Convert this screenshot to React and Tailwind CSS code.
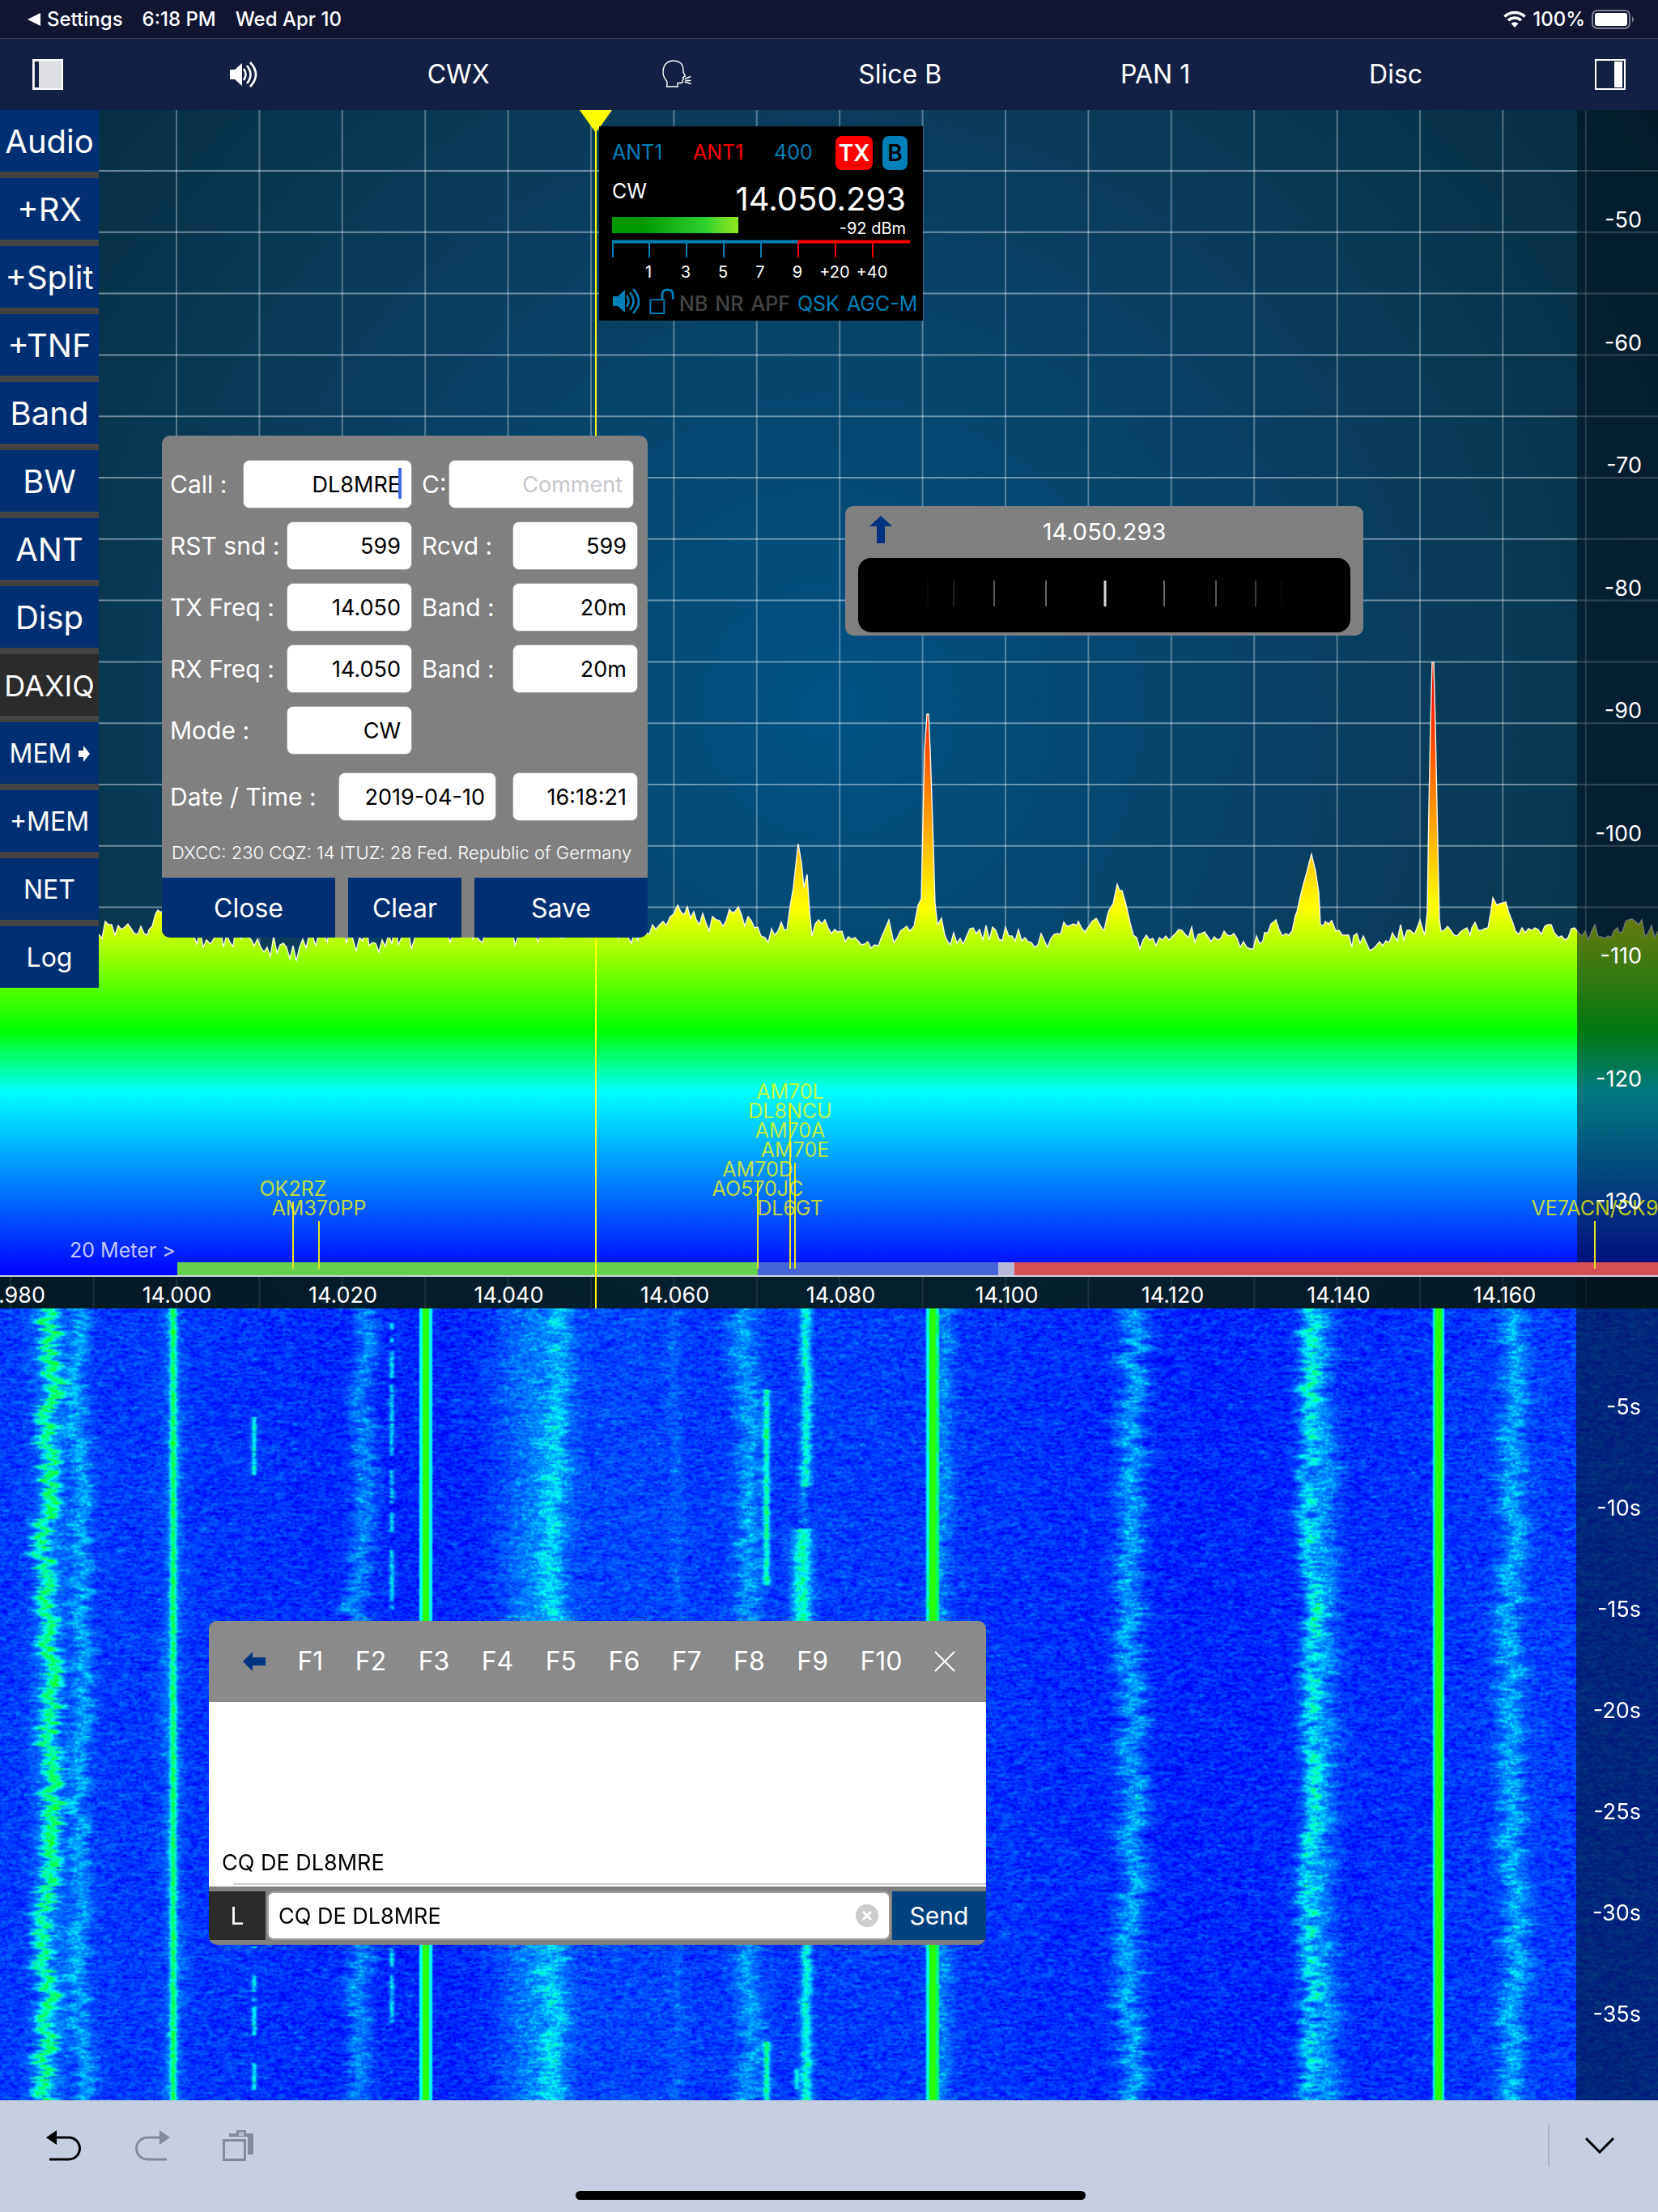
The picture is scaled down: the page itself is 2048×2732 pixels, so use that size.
import React, { useEffect, useRef } from "react";

// Small seeded generator so the noise looks the same on every load
const createRandom = (seed) => {
  let s = seed;
  return () => {
    s = (s * 1664525 + 1013904223) % 4294967296;
    return s / 4294967296;
  };
};

const sideButtons = [
  { label: "Audio" },
  { label: "+RX" },
  { label: "+Split" },
  { label: "+TNF" },
  { label: "Band" },
  { label: "BW" },
  { label: "ANT" },
  { label: "Disp" },
  { label: "DAXIQ", style: "bg-[#2b2b2b] text-[36px]" },
  { label: "MEM", style: "bg-[#003073] text-[32px]", arrow: true },
  { label: "+MEM", style: "bg-[#003073] text-[32px]" },
  { label: "NET", style: "bg-[#003073] text-[32px]" },
  { label: "Log", style: "bg-[#003073] text-[32px]" },
];

const dbmLabels = [-50, -60, -70, -80, -90, -100, -110, -120, -130];
const timeLabels = ["-5s", "-10s", "-15s", "-20s", "-25s", "-30s", "-35s"];
const freqLabels = [
  "13.980", "14.000", "14.020", "14.040", "14.060",
  "14.080", "14.100", "14.120", "14.140", "14.160",
];

// x is the position on the 2048 wide plot, level is the text row counted from below
const spots = [
  { call: "OK2RZ", x: 362, level: 1 },
  { call: "AM370PP", x: 394, level: 0 },
  { call: "AM70L", x: 976, level: 6 },
  { call: "DL8NCU", x: 976, level: 5 },
  { call: "AM70A", x: 976, level: 4 },
  { call: "AM70E", x: 982, level: 3 },
  { call: "AM70D", x: 936, level: 2 },
  { call: "AO570JC", x: 936, level: 1 },
  { call: "DL6GT", x: 976, level: 0 },
  { call: "VE7ACN/CK9", x: 1970, level: 0 },
];

// Shape of the trace without noise: [x, y, noise]
const traceShape = [
  [0, 1018, 1], [122, 1018, 1], [150, 1012, 1], [170, 1018, 1], [184, 1012, 1], [195, 988, 0.5],
  [215, 1000, 1], [260, 1030, 1], [290, 1018, 1], [330, 1034, 1], [370, 1034, 1], [400, 1016, 1],
  [460, 1028, 1], [500, 1016, 1], [600, 1014, 1], [700, 1010, 1], [790, 1012, 1], [815, 1006, 0.6],
  [828, 996, 0.5], [837, 982, 0.4], [845, 994, 0.6], [860, 1000, 0.8], [885, 1000, 0.8],
  [903, 990, 0.6], [912, 984, 0.4], [920, 1008, 0.8], [945, 1022, 1], [972, 1012, 0.6],
  [980, 960, 0.2], [986, 906, 0], [990, 930, 0.1], [993, 960, 0.1], [997, 944, 0.1], [1000, 990, 0.3],
  [1003, 1020, 0.8], [1015, 1005, 0.8], [1040, 1014, 0.8], [1060, 1026, 0.6], [1085, 1032, 0.5],
  [1098, 1000, 0.3], [1104, 1028, 0.4], [1112, 1014, 0.5], [1120, 1008, 0.5], [1129, 1008, 0.3],
  [1134, 982, 0.2], [1138, 974, 0], [1140, 880, 0], [1142, 790, 0], [1145, 746, 0], [1147, 746, 0], [1149, 790, 0],
  [1152, 880, 0], [1155, 980, 0], [1158, 1006, 0.3], [1163, 998, 0.3], [1170, 1026, 0.6],
  [1190, 1030, 0.6], [1202, 1010, 0.6], [1250, 1020, 0.8], [1290, 1026, 0.8], [1318, 1008, 0.6],
  [1332, 1002, 0.5], [1345, 1008, 0.6], [1354, 998, 0.3], [1364, 1012, 0.3], [1370, 988, 0.2],
  [1375, 980, 0.1], [1380, 956, 0], [1383, 964, 0], [1386, 964, 0], [1392, 986, 0.2], [1396, 1004, 0.4],
  [1404, 1022, 0.7], [1440, 1020, 0.9], [1480, 1018, 0.9], [1520, 1020, 0.9], [1540, 1034, 0.7],
  [1562, 1016, 0.6], [1576, 1000, 0.4], [1584, 1020, 0.5], [1596, 1014, 0.4], [1602, 990, 0.2],
  [1610, 956, 0.1], [1620, 919, 0], [1625, 940, 0], [1629, 966, 0], [1631, 1006, 0.2], [1637, 1002, 0.4],
  [1650, 1014, 0.7], [1672, 1020, 0.8], [1700, 1032, 0.6], [1722, 1020, 0.8], [1748, 1016, 0.6],
  [1754, 1000, 0.3], [1760, 1018, 0.2], [1763, 990, 0], [1765, 860, 0], [1767, 760, 0], [1769, 682, 0], [1771, 682, 0], [1773, 760, 0],
  [1775, 860, 0], [1778, 1000, 0.1], [1780, 1014, 0.2], [1788, 1008, 0.4], [1800, 1020, 0.6], [1818, 1010, 0.6],
  [1838, 1010, 0.2], [1844, 973, 0.1], [1849, 982, 0.1], [1860, 978, 0.1], [1868, 1002, 0.4],
  [1876, 1018, 0.6], [1900, 1012, 0.7], [1912, 1006, 0.6], [1925, 1022, 0.5], [1950, 1016, 0.8],
  [2000, 1016, 0.9], [2024, 1006, 0.7], [2048, 1014, 0.9],
];

const buildTrace = () => {
  const random = createRandom(11);
  const points = [];
  for (let i = 0; i < traceShape.length - 1; i++) {
    const [x1, y1, n1] = traceShape[i];
    const [x2, y2, n2] = traceShape[i + 1];
    points.push([x1, y1]);
    for (let x = x1 + 4; x < x2 - 1; x += 4) {
      const t = (x - x1) / (x2 - x1);
      const noise = (random() + random() - 1) * 21 * (n1 + (n2 - n1) * t);
      points.push([x, Math.round(y1 + (y2 - y1) * t + noise)]);
    }
  }
  points.push([2048, 1014]);
  return points.map((p) => p.join(",")).join(" L");
};

const trace = buildTrace();

const Spectrum = () => (
  <svg
    viewBox="0 0 2048 1480"
    preserveAspectRatio="none"
    className="absolute inset-0 h-full w-full"
    aria-hidden="true"
  >
    <defs>
      <radialGradient id="sky" gradientUnits="userSpaceOnUse" cx="1024" cy="740" r="1270">
        <stop offset="0" stopColor="#005286" />
        <stop offset="0.65" stopColor="#0a3a55" />
        <stop offset="1" stopColor="#052c3e" />
      </radialGradient>
      <linearGradient id="level" gradientUnits="userSpaceOnUse" x1="0" y1="680" x2="0" y2="1440">
        <stop offset="0.06" stopColor="#ff1400" />
        <stop offset="0.2" stopColor="#ff7800" />
        <stop offset="0.4" stopColor="#ffff00" />
        <stop offset="0.6" stopColor="#00ff00" />
        <stop offset="0.7" stopColor="#00ffff" />
        <stop offset="1" stopColor="#0000ff" />
      </linearGradient>
    </defs>
    <rect width="2048" height="1480" fill="url(#sky)" />
    <g stroke="#ffffff" strokeOpacity="0.32" strokeWidth="2">
      {Array.from({ length: 20 }, (_, i) => (
        <line key={i} x1={13.2 + i * 102.4} x2={13.2 + i * 102.4} y1="0" y2="1480" />
      ))}
    </g>
    <g stroke="#ffffff" strokeOpacity="0.42" strokeWidth="2">
      {Array.from({ length: 13 }, (_, i) => (
        <line key={i} x1="0" x2="2048" y1={75 + i * 75.8} y2={75 + i * 75.8} />
      ))}
    </g>
    <path d={`M${trace} L2048,1440 L0,1440 Z`} fill="url(#level)" />
    <path d={`M${trace}`} fill="none" stroke="#f8f8e8" strokeWidth="1.400" />

    {/* Dark shade behind the dBm scale and the frequency axis */}
    <rect x="1948" y="0" width="100" height="1480" fill="#04101a" fillOpacity="0.56" />
    <rect x="0" y="1440" width="2048" height="40" fill="#04121a" fillOpacity="0.7" />

    {/* Band plan */}
    <rect x="219" y="1423" width="717" height="17" fill="#66d04f" />
    <rect x="936" y="1423" width="297" height="17" fill="#4764d6" />
    <rect x="1233" y="1423" width="20" height="17" fill="#b8b8d8" />
    <rect x="1253" y="1423" width="795" height="17" fill="#d55055" />
    <rect x="0" y="1439" width="2048" height="2" fill="#d0d4e0" />
  </svg>
);

// Signals seen in the waterfall. parts: [from, to] rows in the 978 high plot
const signals = [
  { x: 58, width: 10, power: 0.5, wobble: 7, rough: 10 },
  { x: 62, width: 20, power: 0.14, wobble: 6, rough: 5 },
  { x: 98, width: 12, power: 0.26, wobble: 5, rough: 8 },
  { x: 213, width: 4, power: 0.5, wobble: 0, rough: 0 },
  { x: 213, width: 12, power: 0.16, wobble: 3, rough: 4 },
  { x: 313, width: 3, power: 0.45, wobble: 0, rough: 0, parts: [[134, 205], [788, 965]], keyed: true },
  { x: 447, width: 14, power: 0.25, wobble: 6, rough: 8 },
  { x: 483, width: 3, power: 0.4, wobble: 0, rough: 0, parts: [[17, 370], [790, 880]], keyed: true },
  { x: 525, width: 4, power: 1.1, wobble: 0, rough: 0, flat: true },
  { x: 658, width: 44, power: 0.22, wobble: 4, rough: 8 },
  { x: 686, width: 15, power: 0.22, wobble: 6, rough: 10 },
  { x: 770, width: 80, power: 0.06, wobble: 4, rough: 4 },
  { x: 834, width: 9, power: 0.08, wobble: 4, rough: 4 },
  { x: 922, width: 16, power: 0.24, wobble: 5, rough: 8 },
  { x: 946, width: 4, power: 0.5, wobble: 0, rough: 0, parts: [[100, 340], [905, 978]] },
  { x: 995, width: 7, power: 0.45, wobble: 1, rough: 2, parts: [[0, 218], [760, 978]] },
  { x: 992, width: 5, power: 0.15, wobble: 2, rough: 2, parts: [[218, 265]] },
  { x: 990, width: 12, power: 0.5, wobble: 0, rough: 1, parts: [[272, 400]] },
  { x: 983, width: 3, power: 0.4, wobble: 0, rough: 0, parts: [[940, 962]] },
  { x: 1151, width: 4, power: 1.1, wobble: 0, rough: 0, flat: true },
  { x: 1163, width: 13, power: 0.2, wobble: 4, rough: 6 },
  { x: 1396, width: 16, power: 0.31, wobble: 4, rough: 11 },
  { x: 1617, width: 10, power: 0.3, wobble: 7, rough: 9 },
  { x: 1632, width: 19, power: 0.27, wobble: 5, rough: 9 },
  { x: 1776, width: 4, power: 1.1, wobble: 0, rough: 0, flat: true },
  { x: 1866, width: 16, power: 0.28, wobble: 4, rough: 10 },
];

const palette = [
  [0, 0, 0, 190],
  [0.15, 0, 0, 255],
  [0.5, 0, 130, 255],
  [0.72, 0, 255, 255],
  [0.92, 0, 255, 90],
  [1.15, 40, 255, 0],
];

const Waterfall = () => {
  const canvasRef = useRef(null);

  useEffect(() => {
    const canvas = canvasRef.current;
    const ctx = canvas.getContext("2d");
    const { width, height } = canvas;
    const image = ctx.createImageData(width, height);
    const random = createRandom(77);
    const jitter = signals.map(() => 0);
    const keyed = signals.map(() => true);
    const row = new Float32Array(width);

    for (let y = 0; y < height; y++) {
      const py = y * 2;
      // Noise floor with short horizontal streaks
      let streak = 0;
      for (let x = 0; x < width; x++) {
        streak = streak * 0.5 + (random() + random() - 1) * 0.15;
        if (random() < 0.006) streak += 0.14;
        row[x] = 0.28 + 0.03 * Math.sin(x / 75 + 1) + streak;
      }
      signals.forEach((s, i) => {
        jitter[i] = jitter[i] * 0.6 + (random() - 0.5) * s.rough * 1.6;
        if (random() < 0.2) keyed[i] = random() < 0.7;
        if (s.parts && !s.parts.some(([a, b]) => py >= a && py <= b)) return;
        if (s.keyed && !keyed[i]) return;
        const drift = s.wobble * (0.6 * Math.sin(py / 95 + s.x) + 0.4 * Math.sin(py / 37 + s.x * 2));
        const center = (s.x + drift + jitter[i]) / 2;
        const half = s.width / 2;
        const from = Math.max(0, Math.floor(center - half * 2.5));
        const to = Math.min(width - 1, Math.ceil(center + half * 2.5));
        for (let x = from; x <= to; x++) {
          const d = Math.abs(x - center) / half;
          if (s.flat) {
            if (d <= 1.2) row[x] = d < 0.8 ? 1.15 : 1;
            else if (d < 1.8) row[x] = Math.max(row[x], 0.72);
          } else {
            row[x] += s.power * Math.exp(-d * d) * (0.8 + random() * 0.4);
          }
        }
      });
      for (let x = 0; x < width; x++) {
        const v = Math.min(1.14, Math.max(0, row[x]));
        let k = 1;
        while (v > palette[k][0]) k++;
        const a = palette[k - 1];
        const b = palette[k];
        const t = (v - a[0]) / (b[0] - a[0]);
        const p = (y * width + x) * 4;
        image.data[p] = a[1] + (b[1] - a[1]) * t;
        image.data[p + 1] = a[2] + (b[2] - a[2]) * t;
        image.data[p + 2] = a[3] + (b[3] - a[3]) * t;
        image.data[p + 3] = 255;
      }
    }
    ctx.putImageData(image, 0, 0);
  }, []);

  return <canvas ref={canvasRef} width={1024} height={489} className="absolute inset-0 h-full w-full" />;
};

const SpeakerIcon = ({ className }) => (
  <svg viewBox="0 0 36 32" className={className} fill="none" aria-hidden="true">
    <path d="M1 10h6l9-8v28l-9-8H1z" fill="currentColor" />
    <g stroke="currentColor" strokeWidth="2.6">
      <path d="M18 9q5 7 0 14" />
      <path d="M22 5q9 11 0 22" />
      <path d="M26 1q14 15 0 30" />
    </g>
  </svg>
);

const StatusBar = () => (
  <div className="flex h-12 shrink-0 items-center justify-between border-b border-[#373c54] bg-[#111530] pl-[34px] pr-[28px] text-[24px] font-medium">
    <div className="flex items-center">
      <a href="#settings" className="flex items-center gap-2">
        <svg viewBox="0 0 16 18" className="h-[18px] w-4" aria-hidden="true">
          <path d="M16 1v16L0 9z" fill="currentColor" />
        </svg>
        Settings
      </a>
      <span className="ml-6">6:18 PM</span>
      <span className="ml-6">Wed Apr 10</span>
    </div>
    <div className="flex items-center gap-2">
      <svg viewBox="0 0 28 21" className="h-[21px] w-7" fill="none" stroke="currentColor" aria-hidden="true">
        <path d="M1.5 7.5a18 18 0 0 1 25 0" strokeWidth="3.6" />
        <path d="M6 12.3a11.500 11.500 0 0 1 16 0" strokeWidth="3.6" />
        <path d="M14 21l-4.500-5a6.500 6.500 0 0 1 9 0z" fill="currentColor" stroke="none" />
      </svg>
      100%
      <svg viewBox="0 0 54 24" className="h-6 w-[54px]" aria-hidden="true">
        <rect x="1" y="1" width="46" height="22" rx="6" fill="none" stroke="#7d8092" strokeWidth="2" />
        <rect x="4" y="4" width="40" height="16" rx="3" fill="#fff" />
        <path d="M50 8q4 4 0 8z" fill="#7d8092" />
      </svg>
    </div>
  </div>
);

const Toolbar = () => (
  <nav className="flex h-[88px] shrink-0 items-center justify-between bg-[#142043] px-10 text-[32px]">
    <button aria-label="Left panel">
      <svg viewBox="0 0 38 38" className="h-[38px] w-[38px]" aria-hidden="true">
        <rect x="1" y="1" width="36" height="36" fill="#dedfe4" stroke="#fff" strokeWidth="2" />
        <rect x="3" y="3" width="5" height="32" fill="#142043" />
      </svg>
    </button>
    <button aria-label="Audio output" className="mr-1">
      <SpeakerIcon className="h-8 w-9" />
    </button>
    <button className="mr-2">CWX</button>
    <button aria-label="Voice keyer">
      <svg viewBox="0 0 38 36" className="h-9 w-[38px]" fill="none" stroke="currentColor" strokeWidth="1.400" aria-hidden="true">
        <path d="M6.500 33H20v-4.500h4.500q2 0 1.500-3.500l1.500-1-1-2.500L29.500 20 27 15q.5-7-3-11Q20 1 15.500 1 8 1 4.500 6 2 9.500 2 15q0 6 4.500 11 1.500 3 0 7z" />
        <path d="M29 23.500l7-3M29.500 25.500h7M28.500 27l8 2.500" />
      </svg>
    </button>
    <button className="mr-4">Slice B</button>
    <button className="mr-4">PAN 1</button>
    <button className="mr-2">Disc</button>
    <button aria-label="Right panel">
      <svg viewBox="0 0 38 38" className="h-[38px] w-[38px]" aria-hidden="true">
        <rect x="1" y="1" width="36" height="36" fill="none" stroke="#fff" strokeWidth="2" />
        <rect x="24" y="3" width="10" height="32" fill="#fff" />
      </svg>
    </button>
  </nav>
);

const Sidebar = () => (
  <aside className="relative flex w-[122px] flex-col gap-2 self-start bg-[#444444]">
    {sideButtons.map((b) => (
      <button
        key={b.label}
        className={`flex h-[76px] items-center justify-center gap-2 whitespace-nowrap pt-[2px] ${
          b.style || "bg-[#003073] text-[40px]"
        }`}
      >
        {b.label}
        {b.arrow && (
          <svg viewBox="0 0 14 20" className="h-5 w-[14px]" aria-hidden="true">
            <path d="M0 6h6V0l8 10-8 10v-6H0z" fill="currentColor" />
          </svg>
        )}
      </button>
    ))}
  </aside>
);

const SlicePanel = () => (
  <section className="absolute left-[740px] top-5 flex h-[240px] w-[400px] flex-col bg-black pl-4 text-[#0080b8]">
    <div className="mt-3 flex h-[42px] items-center text-[25px]">
      <span className="w-[100px]">ANT1</span>
      <span className="w-[100px] text-[#ff0000]">ANT1</span>
      <span className="w-[76px]">400</span>
      <button className="h-[42px] w-[46px] rounded-lg bg-[#ff0000] text-[28px] font-semibold leading-[42px] text-white">
        TX
      </button>
      <button className="ml-3 h-[42px] w-[31px] rounded-lg bg-[#0080b8] text-[28px] font-semibold leading-[42px] text-black">
        B
      </button>
    </div>
    <div className="flex h-[50px] justify-between pr-[21px] text-white">
      <span className="pt-[10px] text-[25px] leading-[32px]">CW</span>
      <span className="pt-3 text-[40px] leading-[48px]">14.050.293</span>
    </div>
    <div className="mt-2 flex h-[20px] justify-between pr-[21px]">
      <div className="h-full w-[156px] bg-linear-to-r from-[#009a00] from-25% via-[#2ed22e] via-75% to-[#8ce820]" />
      <span className="pt-1 text-[20px] leading-[20px] text-white">-92 dBm</span>
    </div>
    <svg viewBox="0 0 368 24" className="mt-2 h-6 w-[368px]" aria-hidden="true">
      <path d="M0 2.500h230M1 2v20M46 2v20M92 2v20M138 2v20M184 2v20" stroke="#0080b8" strokeWidth="2" />
      <path d="M0 2.500h230" stroke="#0080b8" strokeWidth="4" />
      <path d="M230 2v20M276 2v20M322 2v20" stroke="#ff0000" strokeWidth="2" />
      <path d="M230 2.500h138" stroke="#ff0000" strokeWidth="4" />
    </svg>
    <div className="mt-1 flex pl-[22px] text-center text-[20px] leading-[24px] text-white">
      {["1", "3", "5", "7", "9", "+20", "+40"].map((s) => (
        <span key={s} className="w-[46px]">{s}</span>
      ))}
    </div>
    <div className="mt-2 flex h-8 items-end gap-[9px] whitespace-nowrap text-[25px] leading-[26px]">
      <button aria-label="Mute" className="self-start">
        <SpeakerIcon className="h-8 w-9" />
      </button>
      <button aria-label="Lock" className="self-start">
        <svg viewBox="0 0 34 34" className="h-8 w-[33px]" fill="none" stroke="currentColor" strokeWidth="2" aria-hidden="true">
          <path d="M2 15h18v18H2z" />
          <path d="M17.500 15V8q0-6 7-6t7 6v6.500" strokeWidth="3" />
        </svg>
      </button>
      <span className="-ml-1 font-medium text-[#444444]">NB</span>
      <span className="font-medium text-[#444444]">NR</span>
      <span className="font-medium text-[#444444]">APF</span>
      <span>QSK</span>
      <span>AGC-M</span>
    </div>
  </section>
);

const Field = ({ id, className, ...rest }) => (
  <input
    id={id}
    className={`h-[60px] rounded-lg border border-[#a0a0a0] bg-white px-[13px] text-right text-[27px] text-black placeholder:text-[#c7c7cd] focus:outline-none ${className}`}
    {...rest}
  />
);

const LogPanel = () => (
  <form
    onSubmit={(e) => e.preventDefault()}
    className="absolute left-[200px] top-[402px] w-[600px] overflow-hidden rounded-[10px] bg-[#808080] pt-[30px]"
  >
    <div className="flex flex-col gap-4 pl-[10px] text-[30px]">
      <div className="flex items-center">
        <label htmlFor="call" className="w-[90px]">Call :</label>
        <div className="relative">
          <Field id="call" className="w-[209px]" defaultValue="DL8MRE" />
          <span className="absolute right-[13px] top-[10px] h-[38px] w-1 bg-[#4169e8]" />
        </div>
        <label htmlFor="comment" className="ml-3 w-[33px]">C:</label>
        <Field id="comment" className="w-[229px]" placeholder="Comment" />
      </div>
      <div className="flex items-center">
        <label htmlFor="rst" className="w-[144px] whitespace-nowrap">RST snd :</label>
        <Field id="rst" className="w-[155px]" defaultValue="599" />
        <label htmlFor="rcvd" className="ml-3 w-[112px]">Rcvd :</label>
        <Field id="rcvd" className="w-[155px]" defaultValue="599" />
      </div>
      <div className="flex items-center">
        <label htmlFor="txfreq" className="w-[144px] whitespace-nowrap">TX Freq :</label>
        <Field id="txfreq" className="w-[155px]" defaultValue="14.050" />
        <label htmlFor="txband" className="ml-3 w-[112px]">Band :</label>
        <Field id="txband" className="w-[155px]" defaultValue="20m" />
      </div>
      <div className="flex items-center">
        <label htmlFor="rxfreq" className="w-[144px] whitespace-nowrap">RX Freq :</label>
        <Field id="rxfreq" className="w-[155px]" defaultValue="14.050" />
        <label htmlFor="rxband" className="ml-3 w-[112px]">Band :</label>
        <Field id="rxband" className="w-[155px]" defaultValue="20m" />
      </div>
      <div className="flex items-center">
        <label htmlFor="mode" className="w-[144px]">Mode :</label>
        <Field id="mode" className="w-[155px]" defaultValue="CW" />
      </div>
      <div className="flex items-center pt-[6px]">
        <label htmlFor="date" className="w-[208px] whitespace-nowrap">Date / Time :</label>
        <Field id="date" className="w-[195px]" defaultValue="2019-04-10" />
        <Field id="time" className="ml-5 w-[155px]" defaultValue="16:18:21" aria-label="Time" />
      </div>
    </div>
    <p className="mt-6 whitespace-nowrap pl-3 text-[22px] font-light leading-[30px]">
      DXCC: 230 CQZ: 14 ITUZ: 28 Fed. Republic of Germany
    </p>
    <div className="mt-4 flex gap-4 text-[32px]">
      <button type="button" className="h-[74px] w-[214px] bg-[#003073] pt-[2px]">Close</button>
      <button type="button" className="h-[74px] flex-1 bg-[#003073] pt-[2px]">Clear</button>
      <button type="submit" className="h-[74px] w-[214px] bg-[#003073] pt-[2px]">Save</button>
    </div>
  </form>
);

const wheelMarks = [
  { x: 86, color: "#161616", width: 1 },
  { x: 118, color: "#3a3a3a", width: 1 },
  { x: 168, color: "#565656", width: 2 },
  { x: 232, color: "#666666", width: 2 },
  { x: 305, color: "#d8d8d8", width: 3 },
  { x: 378, color: "#666666", width: 2 },
  { x: 442, color: "#565656", width: 2 },
  { x: 491, color: "#3a3a3a", width: 2 },
  { x: 523, color: "#161616", width: 1 },
];

const TuningPanel = () => (
  <section className="absolute left-[1044px] top-[489px] w-[640px] rounded-[10px] bg-[#808080] px-4 pb-1">
    <div className="relative flex h-16 items-center justify-center text-[29px]">
      <button aria-label="Step up" className="absolute left-[14px] top-3">
        <svg viewBox="0 0 28 34" className="h-[34px] w-7" aria-hidden="true">
          <path d="M14 0l14 13h-9v21h-10V13H0z" fill="#003380" />
        </svg>
      </button>
      14.050.293
    </div>
    <div className="rounded-2xl bg-black">
      <svg viewBox="0 0 608 92" className="h-[92px] w-full" aria-hidden="true">
        {wheelMarks.map((m) => (
          <line key={m.x} x1={m.x} x2={m.x} y1="28" y2="60" stroke={m.color} strokeWidth={m.width} />
        ))}
      </svg>
    </div>
  </section>
);

const CwxPanel = () => (
  <section className="absolute left-[258px] top-[386px] flex h-[400px] w-[960px] flex-col overflow-hidden rounded-[10px] bg-[#808080]">
    <div className="flex h-[100px] items-center justify-between bg-[#8a8a8a] pl-[42px] pr-[38px] text-[32px]">
      <button aria-label="Back">
        <svg viewBox="0 0 28 24" className="h-6 w-7" aria-hidden="true">
          <path d="M0 12L12 0v7h16v10H12v7z" fill="#003380" />
        </svg>
      </button>
      {["F1", "F2", "F3", "F4", "F5", "F6", "F7", "F8", "F9", "F10"].map((f) => (
        <button key={f}>{f}</button>
      ))}
      <button aria-label="Close">
        <svg viewBox="0 0 26 26" className="h-[26px] w-[26px]" stroke="currentColor" strokeWidth="2" aria-hidden="true">
          <path d="M1 1l24 24M25 1L1 25" />
        </svg>
      </button>
    </div>
    <div className="flex flex-1 flex-col justify-end bg-white pb-[2px] text-[27px] text-black">
      <p className="pl-4 leading-[50px]">CQ DE DL8MRE</p>
      <div className="ml-[30px] h-[2px] bg-[#c8c7cc]" />
    </div>
    <div className="flex h-[72px] items-center text-[27px]">
      <button className="h-[60px] w-[70px] bg-[#2b2b2b] text-[30px]">L</button>
      <div className="mx-[2px] flex h-[60px] flex-1 items-center rounded-lg border-2 border-[#a0a0a0] bg-white pl-3 pr-[13px]">
        <input
          aria-label="CW text"
          className="h-full min-w-0 flex-1 bg-transparent text-black focus:outline-none"
          defaultValue="CQ DE DL8MRE"
        />
        <button aria-label="Clear text">
          <svg viewBox="0 0 28 28" className="h-7 w-7" aria-hidden="true">
            <circle cx="14" cy="14" r="14" fill="#cccccc" />
            <path d="M9 9l10 10M19 9L9 19" stroke="#fff" strokeWidth="3" />
          </svg>
        </button>
      </div>
      <button className="h-[60px] w-[116px] bg-[#004180] text-[30px]">Send</button>
    </div>
  </section>
);

const KeyboardBar = () => (
  <footer className="flex h-[138px] shrink-0 flex-col justify-between bg-[#c5cfe1] pb-[15px] pl-[57px] pr-[54px] pt-[30px]">
    <div className="flex items-center justify-between">
      <div className="flex items-center gap-[65px]">
        <button aria-label="Undo" className="text-black">
          <svg viewBox="0 0 44 38" className="h-[38px] w-11" fill="none" stroke="currentColor" strokeWidth="3" aria-hidden="true">
            <path d="M4 9h24a13.500 13.500 0 0 1 0 27H4" />
            <path d="M13 0L0 9l13 9z" fill="currentColor" stroke="none" />
          </svg>
        </button>
        <button aria-label="Redo" className="text-[#838b98]">
          <svg viewBox="0 0 44 38" className="h-[38px] w-11" fill="none" stroke="currentColor" strokeWidth="3" aria-hidden="true">
            <path d="M40 9H16a13.500 13.500 0 0 0 0 27h24" />
            <path d="M31 0l13 9-13 9z" fill="currentColor" stroke="none" />
          </svg>
        </button>
        <button aria-label="Paste" className="text-[#838b98]">
          <svg viewBox="0 0 38 38" className="h-[38px] w-[38px]" fill="none" stroke="currentColor" aria-hidden="true">
            <path d="M1.500 12.500h26v24h-26z" strokeWidth="3" />
            <path d="M8 8V4h9V0h12v4h9v26h-7V8z" fill="currentColor" stroke="none" />
            <path d="M21 3h4v3h-4z" stroke="#c5cfe1" strokeWidth="1.500" />
          </svg>
        </button>
      </div>
      <div className="flex items-center gap-[44px]">
        <div className="h-[52px] w-[2px] bg-[#abb2ba]" />
        <button aria-label="Hide keyboard" className="text-black">
          <svg viewBox="0 0 36 20" className="h-5 w-9" fill="none" stroke="currentColor" strokeWidth="3" aria-hidden="true">
            <path d="M1 1l17 17L35 1" />
          </svg>
        </button>
      </div>
    </div>
    <div className="h-[11px] w-[630px] self-center rounded-full bg-black" />
  </footer>
);

export default function App() {
  return (
    <div className="flex h-screen min-h-[2434px] flex-col overflow-hidden bg-[#111530] font-['Inter','Liberation_Sans',sans-serif] text-white">
      <StatusBar />
      <Toolbar />

      {/* Panadapter */}
      <main className="relative flex min-h-[1300px] flex-[1480] justify-between overflow-hidden">
        <Spectrum />
        <Sidebar />

        {/* Slice marker */}
        <div className="absolute bottom-0 left-[735px] top-0 w-[2px] bg-[#ffff00]" />
        <svg viewBox="0 0 40 28" className="absolute left-[716px] top-0 h-7 w-10" aria-hidden="true">
          <path d="M0 0h40L20 28z" fill="#ffff00" />
        </svg>

        {spots.map((s) => (
          <div
            key={s.call}
            className="absolute bottom-[49px] flex w-[160px] -translate-x-1/2 flex-col items-center text-[25px] leading-[24px] text-[#ffff00]/75"
            style={{ left: `${(s.x / 2048) * 100}%`, height: 87 + s.level * 24 }}
          >
            <span>{s.call}</span>
            <span className="mt-1 w-[2px] flex-1 bg-[#e6e61e]" />
          </div>
        ))}

        <div className="absolute bottom-[56px] left-[86px] text-[25px] leading-[32px] text-white/75">
          20 Meter &gt;
        </div>
        <div className="absolute inset-x-0 bottom-0 -ml-[89px] flex h-[40px] items-center overflow-hidden pt-2 text-[27px]">
          {freqLabels.map((f) => (
            <span key={f} className="w-[205px] shrink-0 text-center">{f}</span>
          ))}
        </div>

        <div className="relative flex w-[100px] flex-col justify-between pb-[116px] pr-[20px] pt-[120px] text-right text-[27px] leading-[32px]">
          {dbmLabels.map((d) => (
            <span key={d}>{d}</span>
          ))}
        </div>

        <SlicePanel />
        <LogPanel />
        <TuningPanel />
      </main>

      {/* Waterfall */}
      <section className="relative flex min-h-[860px] flex-[978] justify-end overflow-hidden">
        <Waterfall />
        <div className="relative flex w-[101px] flex-col justify-between bg-[#001c38]/65 pb-[90px] pr-[21px] pt-[106px] text-right text-[27px] leading-[32px]">
          {timeLabels.map((t) => (
            <span key={t}>{t}</span>
          ))}
        </div>
        <CwxPanel />
      </section>

      <KeyboardBar />
    </div>
  );
}
